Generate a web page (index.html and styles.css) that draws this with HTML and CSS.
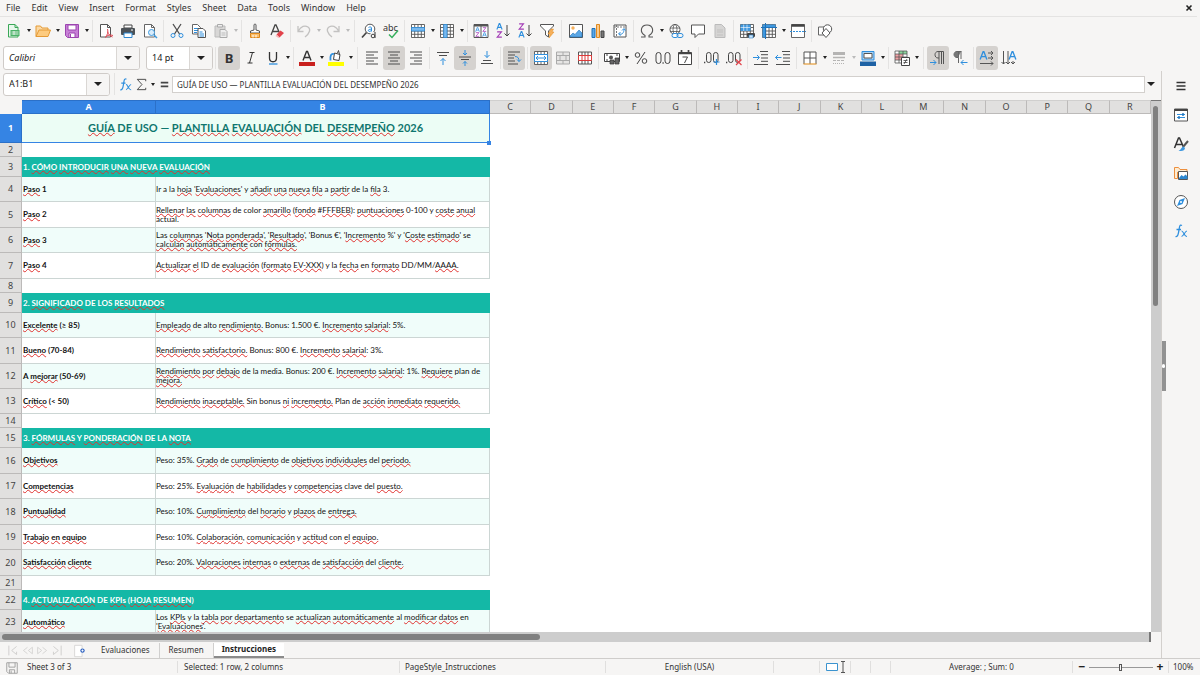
FILE: index.html
```html
<!DOCTYPE html>
<html lang="en">
<head>
<meta charset="utf-8">
<title>Instrucciones - Calc</title>
<link rel="stylesheet" href="styles.css">
</head>
<body>
<svg class="defs" aria-hidden="true">
  <symbol id="new" viewBox="0 0 16 16"><path d="M2.500 1.500h6.500l3 3v9.500h-9.500z" fill="#e8f8ec" stroke="#3aa757"/><path d="M9 1.500v3h3" fill="none" stroke="#3aa757"/><path d="M4.500 7h9v6h-9z" fill="#4bb268"/><path d="M5.500 9h7M5.500 11h7M8 8v4" stroke="#fff" stroke-width=".8"/></symbol>
  <symbol id="open" viewBox="0 0 16 16"><path d="M1 13.500V3h4.500l1.500 2h6v2" fill="#fbd9a4" stroke="#e59a35"/><path d="M1 13.500 4 7h11.500l-2.500 6.500z" fill="#fdcb7f" stroke="#e59a35"/></symbol>
  <symbol id="save" viewBox="0 0 16 16"><path d="M1.500 1.500h13v13H3.500l-2-2z" fill="#c77fd6" stroke="#9c45b0"/><path d="M4 2h8v5H4z" fill="#fff" stroke="#9c45b0"/><path d="M5 10h6v4.500H5z" fill="#fff" stroke="#9c45b0"/><path d="M6.500 11v3" stroke="#9c45b0"/></symbol>
  <symbol id="pdf" viewBox="0 0 16 16"><path d="M2.500 1.500h7l3 3v9.500h-10z" fill="#fff" stroke="#555"/><path d="M9.500 1.500v3h3" fill="none" stroke="#555"/><path d="M9.500 6c1 3 0 5.500-2 8.500M7.500 14c2-2 5-2.500 7.500-1.500M9.500 8.500c1 3 3 5 5 5.500" fill="none" stroke="#df4a55"/></symbol>
  <symbol id="print" viewBox="0 0 16 16"><path d="M4 2h8v3H4z" fill="#fff" stroke="#444"/><rect x="1" y="5" width="14" height="7" rx="1" fill="#4c5257"/><path d="M4 10h8v4.500H4z" fill="#fff" stroke="#2d87d0"/><path d="M11 7h2" stroke="#fff"/></symbol>
  <symbol id="preview" viewBox="0 0 16 16"><path d="M2.500 1.500h7l3 3v9.500h-10z" fill="#fff" stroke="#666"/><path d="M9.500 1.500v3h3" fill="none" stroke="#666"/><circle cx="9.500" cy="9.500" r="3" fill="#d9ecfb" stroke="#3f9be0"/><path d="m12 12 3 3" stroke="#3f9be0" stroke-width="1.500"/></symbol>
  <symbol id="cut" viewBox="0 0 16 16"><path d="m4 1 6.500 10M12 1 5.500 11" stroke="#4d4d4d" stroke-width="1.300"/><circle cx="4" cy="12.500" r="2" fill="none" stroke="#2f8fdd"/><circle cx="12" cy="12.500" r="2" fill="none" stroke="#2f8fdd"/></symbol>
  <symbol id="copy" viewBox="0 0 16 16"><path d="M1.500 1.500h5l3 3V11h-8z" fill="#fff" stroke="#666"/><path d="M3 5.500h4M3 7.500h4M3 9.500h3" stroke="#2f8fdd"/><path d="M7 5.500h5l2.500 2.500v6.500H7z" fill="#fff" stroke="#555"/><path d="M8.500 9h3M8.500 11h4.500M8.500 13h4.500" stroke="#2f8fdd"/></symbol>
  <symbol id="paste" viewBox="0 0 16 16"><path d="M2 3h10v11H2z" fill="#d8d7d6" stroke="#bbb"/><path d="M4.500 1.500h5v2.500h-5z" fill="#eee" stroke="#aaa"/><path d="M7 6.500h5l2 2v6H7z" fill="#eee" stroke="#aaa"/><path d="M8.500 10h4M8.500 12h4" stroke="#bbb"/></symbol>
  <symbol id="clone" viewBox="0 0 16 16"><path d="M7 7V2c0-1.300 2-1.300 2 0v5l3.500 1v2h-9V8z" fill="#fff" stroke="#555"/><path d="M3.500 10.500h9v4h-9z" fill="#fbc070" stroke="#e08a1e"/><path d="M6 12v2.500M9 12v2.500" stroke="#fff"/></symbol>
  <symbol id="clear" viewBox="0 0 16 16"><path d="M2 12 6 2h1l4 9M3.500 8.500h6" fill="none" stroke="#444" stroke-width="1.300"/><path d="m7.500 11.500 4-4 3.500 2.500-4.500 4.500z" fill="#e2434b"/><path d="m7.500 11.500 3 3-1 .5-3-2z" fill="#f7b5b8"/></symbol>
  <symbol id="undo" viewBox="0 0 16 16"><path d="M2 3v5.500h5.500M2 8.500C5 3 9 2 12 4s2 6-3 10" fill="none" stroke="#c3c2c1" stroke-width="1.300"/></symbol>
  <symbol id="redo" viewBox="0 0 16 16"><path d="M14 3v5.500H8.500M14 8.500C11 3 7 2 4 4s-2 6 3 10" fill="none" stroke="#c3c2c1" stroke-width="1.300"/></symbol>
  <symbol id="find" viewBox="0 0 16 16"><circle cx="9" cy="6" r="4.800" fill="#fff" stroke="#555"/><path d="m5.500 9.500-4.500 5" stroke="#444" stroke-width="1.700"/><path d="M7.500 4.500c1-.8 3-.8 3 .5v3.500M10.500 6.200c-2 0-3.200.4-3.200 1.300 0 1.300 2.500 1.300 3.200-.3" fill="none" stroke="#2f8fdd"/><path d="M9.500 9h6v6.500h-6z" fill="#f6f5f4"/><circle cx="12" cy="13" r="1.800" fill="none" stroke="#444"/><path d="M14 9v6" stroke="#444" stroke-width="1.100"/></symbol>
  <symbol id="spell" viewBox="0 0 16 16"><text x="0" y="7.500" font-size="9" fill="#333">abc</text><path d="m6 11.500 3 3 6-7" fill="none" stroke="#36b05d" stroke-width="1.500"/></symbol>
  <symbol id="grid" viewBox="0 0 16 16"><path d="M1.500 1.500h13v13h-13z" fill="#fff"/><path d="M1.500 4.500h13M1.500 8h13M1.500 11.300h13M4.700 1.500v13M8 1.500v13M11.300 1.500v13M1.500 1.500h13v13h-13z" fill="none" stroke="#555" stroke-width=".9"/></symbol>
  <symbol id="row" viewBox="0 0 16 16"><use href="#grid"/><path d="M1.500 4.500h13V8h-13z" fill="#79b9ee" stroke="#2f8fdd" stroke-width=".8"/></symbol>
  <symbol id="col" viewBox="0 0 16 16"><use href="#grid"/><path d="M4.700 1.500H8v13H4.700z" fill="#79b9ee" stroke="#2f8fdd" stroke-width=".8"/></symbol>
  <symbol id="ga" viewBox="0 0 8 8"><path d="M1 7.500 3.700.5h.6L7 7.500M2 5h4" fill="none" stroke="#2f8fdd" stroke-width="1.200"/></symbol>
  <symbol id="gz" viewBox="0 0 8 8"><path d="M1.300 1h5L1.300 7h5.400" fill="none" stroke="#a33bb5" stroke-width="1.200"/></symbol>
  <symbol id="sort" viewBox="0 0 16 16"><path d="M1 1.500h14v13H1z" fill="#fff" stroke="#555"/><path d="M1 2.500h14" stroke="#555" stroke-width="2"/><path d="M8 3v11" stroke="#555"/><use href="#ga" x="2" y="4" width="5" height="5"/><use href="#gz" x="2" y="9" width="5" height="5"/><use href="#gz" x="9" y="4" width="5" height="5"/><use href="#ga" x="9" y="9" width="5" height="5"/></symbol>
  <symbol id="az" viewBox="0 0 16 16"><use href="#ga" x="1" y="0" width="7" height="7"/><use href="#gz" x="1" y="8" width="7" height="7"/><path d="M12 2v11M9.500 10.500 12 13l2.500-2.500" fill="none" stroke="#444"/></symbol>
  <symbol id="za" viewBox="0 0 16 16"><use href="#gz" x="1" y="0" width="7" height="7"/><use href="#ga" x="1" y="8" width="7" height="7"/><path d="M12 2v11M9.500 10.500 12 13l2.500-2.500" fill="none" stroke="#444"/></symbol>
  <symbol id="filter" viewBox="0 0 16 16"><path d="M1.500 1.500h13v1.500L9.500 8v6l-3-2V8l-5-5z" fill="#fff" stroke="#555"/><path d="m12 6-3 5h2l-1 4 5-6h-2l1.500-3z" fill="#f6b05b" stroke="#e08a1e" stroke-width=".5"/></symbol>
  <symbol id="image" viewBox="0 0 16 16"><path d="M1.500 1.500h13v13h-13z" fill="#fff" stroke="#555"/><circle cx="5" cy="5" r="1.700" fill="#f6b05b"/><path d="m2 13 3-3 2 1.500L11 7l3 3v4H2z" fill="#5aa7e6" stroke="#1e72ba" stroke-width=".6"/></symbol>
  <symbol id="chart" viewBox="0 0 16 16"><path d="M2 5.500h3v9H2z" fill="#5aa7e6" stroke="#1e72ba"/><path d="M6.500 1.500h3v13h-3z" fill="#fbc98a" stroke="#e08a1e"/><path d="M11 8h3v6.500h-3z" fill="#777" stroke="#444"/></symbol>
  <symbol id="pivot" viewBox="0 0 16 16"><path d="M2 2h12v12H2z" fill="#fff" stroke="#555"/><path d="M2 4h12M4.500 2v12" stroke="#777" stroke-dasharray="2 1"/><path d="M7 11c3 1 5-1 5-5M10 7.500 12 5.500l1.500 2M8.500 9 6.500 11l2 1.500" fill="none" stroke="#2f8fdd"/></symbol>
  <symbol id="omega" viewBox="0 0 16 16"><path d="M2 14h4v-1.500C0 9 2 2 8 2s8 7 2 10.500V14h4" fill="none" stroke="#555" stroke-width="1.100"/></symbol>
  <symbol id="link" viewBox="0 0 16 16"><circle cx="7" cy="6.500" r="5" fill="#fff" stroke="#555"/><ellipse cx="7" cy="6.500" rx="2" ry="5" fill="none" stroke="#555" stroke-width=".8"/><path d="M2 5h10M2 8.500h10" stroke="#555" stroke-width=".8"/><rect x="4" y="10.500" width="6" height="4" rx="2" fill="#fff" stroke="#2f8fdd"/><rect x="9" y="10.500" width="6" height="4" rx="2" fill="none" stroke="#2f8fdd"/></symbol>
  <symbol id="comment" viewBox="0 0 16 16"><path d="M1.500 2h13v9H8.500L5 14.500V11H1.500z" fill="#fff" stroke="#555"/></symbol>
  <symbol id="header" viewBox="0 0 16 16"><path d="M3 1.500h6.500L13 5v9.500H3z" fill="#d6d5d4" stroke="#bbb"/><path d="M5 7h6M5 9h6M5 12h6" stroke="#c2c1c0"/></symbol>
  <symbol id="parea" viewBox="0 0 16 16"><use href="#grid"/><path d="M1.500 1.500h10v6.500h-10z" fill="#3f98df"/><path d="M1.500 4.500h10M4.700 1.500v6.500M8 1.500v6.500" stroke="#fff" stroke-width=".6"/><rect x="8" y="10" width="8" height="4" rx="1" fill="#444"/><path d="M10 12h4v3h-4z" fill="#cfe6f9" stroke="#2d87d0" stroke-width=".6"/></symbol>
  <symbol id="freeze" viewBox="0 0 16 16"><use href="#grid"/><path d="M1.500 1.500h13v3h-13zM1.500 4.500H5v10H1.500z" fill="#3f98df"/><path d="M4.500 0v16M0 4.500h16" stroke="#1e72ba"/></symbol>
  <symbol id="split" viewBox="0 0 16 16"><path d="M1.500 1.500h13v13h-13z" fill="#fff" stroke="#666"/><path d="M1.500 2.500h13" stroke="#444" stroke-width="2.500"/><path d="M0 8.500h16" stroke="#2f8fdd" stroke-dasharray="2 1"/></symbol>
  <symbol id="shapes" viewBox="0 0 16 16"><path d="M1.500 4h7v8h-7z" fill="#fff" stroke="#666"/><circle cx="10.500" cy="6" r="4.200" fill="#fff" stroke="#555"/><path d="m9 5.500 4 4.500-4 4.500L5 10z" fill="#fff" stroke="#555"/></symbol>
  <symbol id="italic" viewBox="0 0 16 16"><path d="M6.500 2.500h5M4.500 13h5M9.500 2.500 6.500 13" fill="none" stroke="#333"/></symbol>
  <symbol id="uline" viewBox="0 0 16 16"><path d="M4.500 2v6c0 5 7 5 7 0V2" fill="none" stroke="#333" stroke-width="1.300"/><path d="M4 14h8.500" stroke="#2f8fdd" stroke-width="1.300"/></symbol>
  <symbol id="fcolor" viewBox="0 0 16 16"><path d="m4 10.500 3.500-9h1l3.500 9M5.200 7.500h5.600" fill="none" stroke="#333" stroke-width="1.400"/><path d="M0 12h16v4H0z" fill="#c9211e"/></symbol>
  <symbol id="bcolor" viewBox="0 0 16 16"><path d="M0 12h16v4H0z" fill="#ff0"/><path d="m6.500 3 5.500 1.500-1 6-5.500-1zM9.500 3l1-2.500 1 4" fill="#fff" stroke="#444"/><path d="M6 4C3 3 2 6 2.500 10.500" fill="none" stroke="#2f8fdd" stroke-width="1.800"/></symbol>
  <symbol id="left" viewBox="0 0 16 16"><path d="M2 2h12M2 5h8M2 8h12M2 11h8M2 14h12" stroke="#4d4d4d"/></symbol>
  <symbol id="center" viewBox="0 0 16 16"><path d="M2 2h12M4 5h8M2 8h12M4 11h8M2 14h12" stroke="#4d4d4d"/></symbol>
  <symbol id="right" viewBox="0 0 16 16"><path d="M2 2h12M6 5h8M2 8h12M6 11h8M2 14h12" stroke="#4d4d4d"/></symbol>
  <symbol id="top" viewBox="0 0 16 16"><path d="M2 2.500h12M4 5.500h8" stroke="#4d4d4d"/><path d="M8 15V8.500M5.500 11 8 8.500l2.500 2.500" fill="none" stroke="#2f8fdd"/></symbol>
  <symbol id="middle" viewBox="0 0 16 16"><path d="M2 7h12M4 9.500h8" stroke="#4d4d4d"/><path d="M8 0v5M6 3l2 2 2-2M8 16v-4.500M6 13.500l2-2 2 2" fill="none" stroke="#2f8fdd"/></symbol>
  <symbol id="bottom" viewBox="0 0 16 16"><path d="M4 10.500h8M2 13.500h12" stroke="#4d4d4d"/><path d="M8 1v6.500M5.500 5 8 7.500 10.500 5" fill="none" stroke="#2f8fdd"/></symbol>
  <symbol id="wrap" viewBox="0 0 16 16"><path d="M2 2h12M2 5h7M2 8h6M2 11h7M2 14h10" stroke="#4d4d4d"/><path d="M9 6.500c3 0 4 1.500 4 5M11 9.500l2 2 2-2" fill="none" stroke="#2f8fdd"/></symbol>
  <symbol id="merge" viewBox="0 0 16 16"><use href="#grid"/><path d="M1.500 4.500h13v7h-13z" fill="#fff" stroke="#2f8fdd"/><path d="M3 8h10M5 6 3 8l2 2M11 6l2 2-2 2" fill="none" stroke="#2f8fdd"/></symbol>
  <symbol id="mergec" viewBox="0 0 16 16"><path d="M1.500 2h13v12h-13zM1.500 5.500h13M1.500 10.500h13M8 2v3.500M8 10.500V14M5 5.500v5M11 5.500v5" fill="#e6e5e4" stroke="#aaa"/></symbol>
  <symbol id="unmerge" viewBox="0 0 16 16"><path d="M1.500 2h13v12h-13zM5 2v12M11 2v12M8 2v12" fill="#fff" stroke="#555"/><path d="M1.500 5.500h13v5h-13zM5 5.500v5M8 5.500v5M11 5.500v5" fill="#fff" stroke="#dc3b3b"/></symbol>
  <symbol id="money" viewBox="0 0 16 16"><path d="M.5 3.500h15v8H.5z" fill="#fff" stroke="#444"/><circle cx="7" cy="7.500" r="2" fill="#555"/><path d="M2 5h2M12 5h2M2 10h2" stroke="#444"/><path d="M6 10h4v4H6zM11 8h4v6h-4z" fill="#666" stroke="#333" stroke-width=".7"/></symbol>
  <symbol id="percent" viewBox="0 0 16 16"><circle cx="4.500" cy="5" r="2.300" fill="none" stroke="#444"/><circle cx="11.500" cy="11" r="2.300" fill="none" stroke="#444"/><path d="M12 2 4 14" stroke="#444"/></symbol>
  <symbol id="number" viewBox="0 0 16 16"><rect x="1" y="2.500" width="5" height="11" rx="2.500" fill="none" stroke="#444"/><rect x="10" y="2.500" width="5" height="11" rx="2.500" fill="none" stroke="#444"/><path d="M7.500 13h1.200" stroke="#444" stroke-width="1.300"/></symbol>
  <symbol id="date" viewBox="0 0 16 16"><path d="M1.500 2.500h13v12h-13z" fill="#fff" stroke="#444"/><path d="M1.500 3.500h13M4.500 0v3M11.500 0v3" stroke="#444" stroke-width="1.700"/><path d="M5.500 7h5L7.500 13" fill="none" stroke="#444"/></symbol>
  <symbol id="dec" viewBox="0 0 16 16"><rect x="2.500" y="2.500" width="4.500" height="10" rx="2.200" fill="none" stroke="#444"/><rect x="9.500" y="2.500" width="4.500" height="10" rx="2.200" fill="none" stroke="#444"/><path d="M0 12.500h1.300" stroke="#444" stroke-width="1.300"/></symbol>
  <symbol id="adddec" viewBox="0 0 16 16"><use href="#dec"/><path d="M12.500 9v6M9.500 12h6" stroke="#2f8fdd" stroke-width="1.200"/></symbol>
  <symbol id="deldec" viewBox="0 0 16 16"><use href="#dec"/><path d="m10 9.500 5.500 5.500M15.500 9.500 10 15" stroke="#e2434b" stroke-width="1.200"/></symbol>
  <symbol id="indent" viewBox="0 0 16 16"><path d="M7 1.500h8M8 4.700h7M8 8h7M8 11.300h7M1 14.500h14" stroke="#4d4d4d"/><path d="M0 7.500h6M4 5l2.500 2.500L4 10" fill="none" stroke="#2f8fdd"/></symbol>
  <symbol id="outdent" viewBox="0 0 16 16"><path d="M7 1.500h8M8 4.700h7M8 8h7M8 11.300h7M1 14.500h14" stroke="#4d4d4d"/><path d="M6.500 7.500h-6M3 5 .5 7.500 3 10" fill="none" stroke="#2f8fdd"/></symbol>
  <symbol id="border" viewBox="0 0 16 16"><path d="M2 2h12v12H2z" fill="#fff"/><path d="M2 14V2h12v12M8 2v12M2 8h12" fill="none" stroke="#555"/><path d="M1.500 14h13" stroke="#e59a35" stroke-width="1.200"/></symbol>
  <symbol id="bstyle" viewBox="0 0 16 16"><path d="M2 2h12v3H2z" fill="#b5b4b3"/><path d="M2 7.500h12" stroke="#b5b4b3" stroke-width="1.500"/><path d="M2 10.500h12" stroke="#b5b4b3" stroke-dasharray="3 1"/><path d="M2 13.500h12" stroke="#b5b4b3" stroke-dasharray="1 1"/></symbol>
  <symbol id="bline" viewBox="0 0 16 16"><path d="M2 1.500h12V10H2z" fill="#a9d2f5" stroke="#2f8fdd"/><path d="M4 3.500h8V8H4z" fill="#fff" stroke="#555"/><path d="M0 11.500h16V16H0z" fill="#1e62a5"/></symbol>
  <symbol id="cond" viewBox="0 0 16 16"><path d="M1 1h12v12H1z" fill="#fff"/><path d="M5 1h8v3H5z" fill="#8bd69c"/><path d="M1 4h8v6H1z" fill="#f2a1a4"/><path d="M1 1h12v12H1zM1 4h12M1 7h12M1 10h12M5 1v12M9 1v12" fill="none" stroke="#555" stroke-width=".8"/><path d="M7.500 7.500h8v8h-8z" fill="#fff" stroke="#444"/><path d="M9.500 10.500h4M9.500 12.500h4M13 9l-3 5" stroke="#444" stroke-width=".8"/></symbol>
  <symbol id="ltr" viewBox="0 0 16 16"><path d="M13.500 14V1.500H8C4 1.500 4 8 8 8h1V1.500M11.500 14V1.500M9 8v6" fill="none" stroke="#555"/><path d="M0 12.500h6M3.500 10 6 12.500 3.500 15" fill="none" stroke="#2f8fdd"/></symbol>
  <symbol id="rtl" viewBox="0 0 16 16"><path d="M9 1.500H5c-4 0-4 6 0 6h1z" fill="#777"/><path d="M9.500 1.500H5c-4 0-4 6 0 6h1.500V13M6.500 1.500v6M9 1.500V9" fill="none" stroke="#666"/><path d="M15.500 12.500H9M11.500 10 9 12.500l2.500 2.500" fill="none" stroke="#2f8fdd"/></symbol>
  <symbol id="tlr" viewBox="0 0 16 16"><use href="#ga" x="0" y="1" width="9" height="9"/><path d="M9 3h5M9 8h5M1 13.500h13M12 1l2 2-2 2M12 6l2 2-2 2M12 11.500l2 2-2 2" fill="none" stroke="#555"/></symbol>
  <symbol id="ttb" viewBox="0 0 16 16"><use href="#ga" x="7" y="1" width="9" height="9"/><path d="M2.500 1v13M7 1v13M12 11v3M.5 12l2 2 2-2M5 12l2 2 2-2M10 12l2 2 2-2" fill="none" stroke="#555"/></symbol>
  <symbol id="fx" viewBox="0 0 16 16"><path d="M9 2.500C6.500 1 6.500 4 6 7s-1 7.500-3.500 6.500M3.500 6.500h4.500" fill="none" stroke="#2f8fdd" stroke-width="1.300"/><path d="M8.500 8c2-.5 2.500 6 5.500 5.500M14 8c-2 0-3.500 5.500-5.500 5.500" fill="none" stroke="#2f8fdd" stroke-width="1.100"/></symbol>
  <symbol id="sigma" viewBox="0 0 16 16"><path d="M12.500 4.500v-2h-9L8.500 8l-5 5.500h9v-2" fill="none" stroke="#444"/></symbol>
  <symbol id="equal" viewBox="0 0 16 16"><path d="M4 6h8M4 10h8" stroke="#444" stroke-width="1.700"/></symbol>
  <symbol id="menu" viewBox="0 0 16 16"><path d="M3.500 4.500h9M3.500 8h9M3.500 11.500h9" stroke="#333" stroke-width="1.300"/></symbol>
  <symbol id="props" viewBox="0 0 16 16"><path d="M1.500 2h13v12h-13z" fill="#fff" stroke="#555"/><path d="M1.500 3h13" stroke="#444" stroke-width="2"/><path d="M4 7.500h8M4 10.500h8" stroke="#2f8fdd"/><path d="M10 6v3M6 9v3" stroke="#1e72ba" stroke-width="1.400"/></symbol>
  <symbol id="styles" viewBox="0 0 16 16"><path d="M1.500 12 5.500 2h1l4 9M3 8.500h6" fill="none" stroke="#333" stroke-width="1.500"/><path d="m15 5-5 6" stroke="#555" stroke-width="2"/><path d="M10.500 10.500c-2 0-2 3.500-5 4 3 1.500 6.500 0 6.500-2.500z" fill="#3f98df"/></symbol>
  <symbol id="gallery" viewBox="0 0 16 16"><path d="M1.500 13.500V2.500h4l1.500 2h7V7" fill="#fdecd2" stroke="#ed8f3d"/><path d="M1.500 13.500h3V7" fill="none" stroke="#ed8f3d"/><path d="M5.500 6.500h9v8h-9z" fill="#fff" stroke="#555"/><path d="m6 13 2.500-3 2 1.500 2-2 2 2V14H6z" fill="#2d87d0"/></symbol>
  <symbol id="compass" viewBox="0 0 16 16"><circle cx="8" cy="8" r="6.500" fill="#fff" stroke="#555"/><path d="m12 4-2.500 6L4 12l2.500-6z" fill="#2f8fdd"/><circle cx="8" cy="8" r="1" fill="#fff"/></symbol>
  <symbol id="disk" viewBox="0 0 16 16"><path d="M2 2h12v12H4l-2-2zM4.500 2v5h7V2M5 14v-4h6v4M7 11v3" fill="none" stroke="#999"/></symbol>
  <symbol id="addsheet" viewBox="0 0 16 16"><path d="M3 1.500h8.500v13H3z" fill="#fff" stroke="#d6d5d4"/><circle cx="12" cy="7.500" r="2.500" fill="#3568c4"/><path d="M12 6.300v2.400M10.800 7.500h2.400" stroke="#fff"/></symbol>
  <symbol id="first" viewBox="0 0 16 16"><path d="M3.500 2v12M13 3 7 8l6 5V9.500" fill="none" stroke="#d0cfce" stroke-width="1.200"/></symbol>
  <symbol id="prev" viewBox="0 0 16 16"><path d="M8 4 3 8l5 4M14 4 9 8l5 4z" fill="none" stroke="#d0cfce"/></symbol>
  <symbol id="next" viewBox="0 0 16 16"><path d="m8 4 5 4-5 4M2 4l5 4-5 4z" fill="none" stroke="#d0cfce"/></symbol>
  <symbol id="last" viewBox="0 0 16 16"><path d="M12.500 2v12M3 3l6 5-6 5V9.500" fill="none" stroke="#d0cfce" stroke-width="1.200"/></symbol>
</svg>

<header class="menubar">
  <nav class="menus">
    <button>File</button><button>Edit</button><button>View</button><button>Insert</button><button>Format</button><button>Styles</button><button>Sheet</button><button>Data</button><button>Tools</button><button>Window</button><button>Help</button>
  </nav>
  <button class="close" aria-label="Close"><svg viewBox="0 0 8 8"><path d="m1.500 1.500 5 5M6.500 1.500l-5 5" stroke="#222" stroke-width="1.600"/></svg></button>
</header>

<div class="toolbar standard">
  <button class="tb" aria-label="New"><svg><use href="#new"/></svg></button><button class="dd" aria-label="New options"></button>
  <button class="tb" aria-label="Open"><svg><use href="#open"/></svg></button><button class="dd" aria-label="Open options"></button>
  <button class="tb" aria-label="Save"><svg><use href="#save"/></svg></button><button class="dd" aria-label="Save options"></button>
  <span class="sep"></span>
  <button class="tb" aria-label="Export as PDF"><svg><use href="#pdf"/></svg></button>
  <button class="tb" aria-label="Print"><svg><use href="#print"/></svg></button>
  <button class="tb" aria-label="Print preview"><svg><use href="#preview"/></svg></button>
  <span class="sep"></span>
  <button class="tb" aria-label="Cut"><svg><use href="#cut"/></svg></button>
  <button class="tb" aria-label="Copy"><svg><use href="#copy"/></svg></button>
  <button class="tb" aria-label="Paste"><svg><use href="#paste"/></svg></button><button class="dd off" aria-label="Paste options"></button>
  <span class="sep"></span>
  <button class="tb" aria-label="Clone formatting"><svg><use href="#clone"/></svg></button>
  <button class="tb" aria-label="Clear formatting"><svg><use href="#clear"/></svg></button>
  <span class="sep"></span>
  <button class="tb" aria-label="Undo"><svg><use href="#undo"/></svg></button><button class="dd off" aria-label="Undo options"></button>
  <button class="tb" aria-label="Redo"><svg><use href="#redo"/></svg></button><button class="dd off" aria-label="Redo options"></button>
  <span class="sep wide"></span>
  <button class="tb" aria-label="Find and replace"><svg><use href="#find"/></svg></button>
  <button class="tb" aria-label="Spelling"><svg><use href="#spell"/></svg></button>
  <span class="sep"></span>
  <button class="tb" aria-label="Row"><svg><use href="#row"/></svg></button><button class="dd" aria-label="Row options"></button>
  <button class="tb" aria-label="Column"><svg><use href="#col"/></svg></button><button class="dd" aria-label="Column options"></button>
  <span class="sep"></span>
  <button class="tb" aria-label="Sort"><svg><use href="#sort"/></svg></button>
  <button class="tb" aria-label="Sort ascending"><svg><use href="#az"/></svg></button>
  <button class="tb" aria-label="Sort descending"><svg><use href="#za"/></svg></button>
  <button class="tb" aria-label="AutoFilter"><svg><use href="#filter"/></svg></button>
  <span class="sep wide"></span>
  <button class="tb" aria-label="Image"><svg><use href="#image"/></svg></button>
  <button class="tb" aria-label="Chart"><svg><use href="#chart"/></svg></button>
  <button class="tb" aria-label="Pivot table"><svg><use href="#pivot"/></svg></button>
  <span class="sep"></span>
  <button class="tb" aria-label="Special character"><svg><use href="#omega"/></svg></button><button class="dd" aria-label="Character options"></button>
  <button class="tb" aria-label="Hyperlink"><svg><use href="#link"/></svg></button>
  <button class="tb" aria-label="Comment"><svg><use href="#comment"/></svg></button>
  <button class="tb" aria-label="Headers and footers"><svg><use href="#header"/></svg></button>
  <span class="sep"></span>
  <button class="tb" aria-label="Print area"><svg><use href="#parea"/></svg></button>
  <button class="tb" aria-label="Freeze"><svg><use href="#freeze"/></svg></button><button class="dd" aria-label="Freeze options"></button>
  <button class="tb" aria-label="Split window"><svg><use href="#split"/></svg></button>
  <span class="sep"></span>
  <button class="tb" aria-label="Draw functions"><svg><use href="#shapes"/></svg></button>
</div>

<div class="toolbar formatting">
  <div class="combo font"><input type="text" value="Calibri" aria-label="Font name"><button aria-label="Font list"></button></div>
  <div class="combo size"><input type="text" value="14 pt" aria-label="Font size"><button aria-label="Size list"></button></div>
  <span class="sep"></span>
  <button class="tb on bold" aria-label="Bold">B</button>
  <button class="tb" aria-label="Italic"><svg><use href="#italic"/></svg></button>
  <button class="tb" aria-label="Underline"><svg><use href="#uline"/></svg></button><button class="dd" aria-label="Underline options"></button>
  <span class="sep"></span>
  <button class="tb" aria-label="Font color"><svg><use href="#fcolor"/></svg></button><button class="dd" aria-label="Font color options"></button>
  <button class="tb" aria-label="Background color"><svg><use href="#bcolor"/></svg></button><button class="dd" aria-label="Background options"></button>
  <span class="sep wide"></span>
  <button class="tb" aria-label="Align left"><svg><use href="#left"/></svg></button>
  <button class="tb on" aria-label="Center"><svg><use href="#center"/></svg></button>
  <button class="tb" aria-label="Align right"><svg><use href="#right"/></svg></button>
  <span class="sep"></span>
  <button class="tb" aria-label="Align top"><svg><use href="#top"/></svg></button>
  <button class="tb on" aria-label="Center vertically"><svg><use href="#middle"/></svg></button>
  <button class="tb" aria-label="Align bottom"><svg><use href="#bottom"/></svg></button>
  <span class="sep"></span>
  <button class="tb on" aria-label="Wrap text"><svg><use href="#wrap"/></svg></button>
  <span class="sep"></span>
  <button class="tb on" aria-label="Merge and center"><svg><use href="#merge"/></svg></button>
  <button class="tb" aria-label="Merge cells"><svg><use href="#mergec"/></svg></button>
  <button class="tb" aria-label="Unmerge cells"><svg><use href="#unmerge"/></svg></button>
  <span class="sep"></span>
  <button class="tb" aria-label="Currency"><svg><use href="#money"/></svg></button><button class="dd" aria-label="Currency options"></button>
  <button class="tb" aria-label="Percent"><svg><use href="#percent"/></svg></button>
  <button class="tb" aria-label="Number"><svg><use href="#number"/></svg></button>
  <button class="tb" aria-label="Date"><svg><use href="#date"/></svg></button>
  <span class="sep"></span>
  <button class="tb" aria-label="Add decimal place"><svg><use href="#adddec"/></svg></button>
  <button class="tb" aria-label="Delete decimal place"><svg><use href="#deldec"/></svg></button>
  <span class="sep"></span>
  <button class="tb" aria-label="Increase indent"><svg><use href="#indent"/></svg></button>
  <button class="tb" aria-label="Decrease indent"><svg><use href="#outdent"/></svg></button>
  <span class="sep"></span>
  <button class="tb" aria-label="Borders"><svg><use href="#border"/></svg></button><button class="dd" aria-label="Border options"></button>
  <button class="tb" aria-label="Border style"><svg><use href="#bstyle"/></svg></button><button class="dd off" aria-label="Border style options"></button>
  <button class="tb" aria-label="Border color"><svg><use href="#bline"/></svg></button><button class="dd" aria-label="Border color options"></button>
  <span class="sep"></span>
  <button class="tb" aria-label="Conditional formatting"><svg><use href="#cond"/></svg></button><button class="dd" aria-label="Conditional options"></button>
  <span class="sep wide"></span>
  <button class="tb on" aria-label="Left to right"><svg><use href="#ltr"/></svg></button>
  <button class="tb" aria-label="Right to left"><svg><use href="#rtl"/></svg></button>
  <span class="sep"></span>
  <button class="tb on" aria-label="Text left to right"><svg><use href="#tlr"/></svg></button>
  <button class="tb" aria-label="Text top to bottom"><svg><use href="#ttb"/></svg></button>
</div>

<div class="workspace">
  <main class="main">
    <div class="formulabar">
      <div class="combo name"><input type="text" value="A1:B1" aria-label="Name box"><button aria-label="Name list"></button></div>
      <span class="sep"></span>
      <button class="fb" aria-label="Function wizard"><svg><use href="#fx"/></svg></button>
      <button class="fb" aria-label="Select function"><svg><use href="#sigma"/></svg></button><button class="dd" aria-label="Function options"></button>
      <button class="fb" aria-label="Formula"><svg><use href="#equal"/></svg></button>
      <input class="formula" type="text" value="GUÍA DE USO — PLANTILLA EVALUACIÓN DEL DESEMPEÑO 2026" aria-label="Input line">
      <button class="expand" aria-label="Expand formula bar"></button>
    </div>

    <div class="sheetarea">
      <div class="gridwrap">
        <table class="grid">
          <colgroup><col class="c-num"><col class="c-a"><col class="c-b"><col span="16"></colgroup>
          <thead><tr><th class="corner"></th><th class="sel">A</th><th class="sel">B</th><th>C</th><th>D</th><th>E</th><th>F</th><th>G</th><th>H</th><th>I</th><th>J</th><th>K</th><th>L</th><th>M</th><th>N</th><th>O</th><th>P</th><th>Q</th><th>R</th></tr></thead>
          <tbody>
            <tr class="title"><th class="sel">1</th><td colspan="2"><u>GUÍA</u> DE USO — <u>PLANTILLA</u> <u>EVALUACIÓN</u> DEL <u>DESEMPEÑO</u> 2026<span class="handle"></span></td></tr>
            <tr class="gap"><th>2</th></tr>
            <tr class="head"><th>3</th><td colspan="2">1. <u>CÓMO</u> <u>INTRODUCIR</u> <u>UNA</u> <u>NUEVA</u> <u>EVALUACIÓN</u></td></tr>
            <tr class="step tint"><th>4</th><td><u>Paso</u> 1</td><td>Ir a la <u>hoja</u> '<u>Evaluaciones</u>' y <u>añadir</u> <u>una</u> <u>nueva</u> <u>fila</u> a <u>partir</u> de la <u>fila</u> 3.</td></tr>
            <tr class="step tall"><th>5</th><td><u>Paso</u> 2</td><td><u>Rellenar</u> <u>las</u> <u>columnas</u> de color <u>amarillo</u> (<u>fondo</u> #<u>FFFBEB</u>): <u>puntuaciones</u> 0-100 y <u>coste</u> <u>anual</u> actual.</td></tr>
            <tr class="step tint"><th>6</th><td><u>Paso</u> 3</td><td>Las <u>columnas</u> '<u>Nota</u> <u>ponderada</u>', '<u>Resultado</u>', 'Bonus €', '<u>Incremento</u> %' y '<u>Coste</u> <u>estimado</u>' se <u>calculan</u> <u>automáticamente</u> con <u>fórmulas.</u></td></tr>
            <tr class="step tall"><th>7</th><td><u>Paso</u> 4</td><td><u>Actualizar</u> <u>el</u> ID de <u>evaluación</u> (<u>formato</u> <u>EV-XXX</u>) y la <u>fecha</u> en <u>formato</u> DD/MM/<u>AAAA.</u></td></tr>
            <tr class="gap"><th>8</th></tr>
            <tr class="head"><th>9</th><td colspan="2">2. <u>SIGNIFICADO</u> DE LOS <u>RESULTADOS</u></td></tr>
            <tr class="step tint"><th>10</th><td><u>Excelente</u> (≥ 85)</td><td><u>Empleado</u> de alto <u>rendimiento.</u> Bonus: 1.500 €. <u>Incremento</u> <u>salarial</u>: 5%.</td></tr>
            <tr class="step tall"><th>11</th><td><u>Bueno</u> (70-84)</td><td><u>Rendimiento</u> <u>satisfactorio.</u> Bonus: 800 €. <u>Incremento</u> <u>salarial</u>: 3%.</td></tr>
            <tr class="step tint"><th>12</th><td>A <u>mejorar</u> (50-69)</td><td><u>Rendimiento</u> <u>por</u> <u>debajo</u> de la media. Bonus: 200 €. <u>Incremento</u> <u>salarial</u>: 1%. <u>Requiere</u> plan de <u>mejora.</u></td></tr>
            <tr class="step"><th>13</th><td><u>Crítico</u> (&lt; 50)</td><td><u>Rendimiento</u> <u>inaceptable.</u> Sin bonus <u>ni</u> <u>incremento.</u> Plan de <u>acción</u> <u>inmediato</u> <u>requerido.</u></td></tr>
            <tr class="gap"><th>14</th></tr>
            <tr class="head"><th>15</th><td colspan="2">3. <u>FÓRMULAS</u> Y <u>PONDERACIÓN</u> DE LA <u>NOTA</u></td></tr>
            <tr class="step tall tint"><th>16</th><td><u>Objetivos</u></td><td>Peso: 35%. <u>Grado</u> de <u>cumplimiento</u> de <u>objetivos</u> <u>individuales</u> del <u>periodo.</u></td></tr>
            <tr class="step"><th>17</th><td><u>Competencias</u></td><td>Peso: 25%. <u>Evaluación</u> de <u>habilidades</u> y <u>competencias</u> clave del <u>puesto.</u></td></tr>
            <tr class="step tall tint"><th>18</th><td><u>Puntualidad</u></td><td>Peso: 10%. <u>Cumplimiento</u> del <u>horario</u> y <u>plazos</u> de <u>entrega.</u></td></tr>
            <tr class="step"><th>19</th><td><u>Trabajo</u> <u>en</u> <u>equipo</u></td><td>Peso: 10%. <u>Colaboración</u>, <u>comunicación</u> y <u>actitud</u> con <u>el</u> <u>equipo.</u></td></tr>
            <tr class="step tall tint"><th>20</th><td><u>Satisfacción</u> <u>cliente</u></td><td>Peso: 20%. <u>Valoraciones</u> <u>internas</u> o <u>externas</u> de <u>satisfacción</u> del <u>cliente.</u></td></tr>
            <tr class="gap"><th>21</th></tr>
            <tr class="head"><th>22</th><td colspan="2">4. <u>ACTUALIZACIÓN</u> DE <u>KPIs</u> (<u>HOJA</u> <u>RESUMEN</u>)</td></tr>
            <tr class="step tint"><th>23</th><td><u>Automático</u></td><td>Los <u>KPIs</u> y la <u>tabla</u> <u>por</u> <u>departamento</u> se <u>actualizan</u> <u>automáticamente</u> al <u>modificar</u> <u>datos</u> en '<u>Evaluaciones</u>'.</td></tr>
          </tbody>
        </table>
      </div>
      <div class="vscroll"><div class="vthumb"></div></div>
      <div class="hscroll"><div class="hthumb"></div></div>
    </div>

    <div class="tabs">
      <div class="tabnav">
        <button aria-label="First sheet"><svg><use href="#first"/></svg></button><button aria-label="Previous sheet"><svg><use href="#prev"/></svg></button><button aria-label="Next sheet"><svg><use href="#next"/></svg></button><button aria-label="Last sheet"><svg><use href="#last"/></svg></button>
      </div>
      <button class="add" aria-label="Add sheet"><svg><use href="#addsheet"/></svg></button>
      <button class="tab">Evaluaciones</button><button class="tab">Resumen</button><button class="tab current">Instrucciones</button>
    </div>
  </main>

  <aside class="sidebar">
    <div class="grip"></div>
    <button aria-label="Sidebar settings"><svg><use href="#menu"/></svg></button>
    <button aria-label="Properties"><svg><use href="#props"/></svg></button>
    <button aria-label="Styles"><svg><use href="#styles"/></svg></button>
    <button aria-label="Gallery"><svg><use href="#gallery"/></svg></button>
    <button aria-label="Navigator"><svg><use href="#compass"/></svg></button>
    <button aria-label="Functions"><svg><use href="#fx"/></svg></button>
  </aside>
</div>

<footer class="status">
  <span class="s-doc"><svg><use href="#disk"/></svg>Sheet 3 of 3</span>
  <span class="s-sel">Selected: 1 row, 2 columns</span>
  <span class="s-style">PageStyle_Instrucciones</span>
  <span class="s-lang">English (USA)</span>
  <span class="s-blank"></span>
  <span class="s-mode"><svg viewBox="0 0 20 12"><path d="M.5 2.500h11v7H.5z" fill="#fff" stroke="#3b93cf"/><path d="M15 .5h4M15 11.500h4M17 .5v11" stroke="#555"/></svg></span>
  <span class="s-cell"></span><span class="s-cell"></span>
  <span class="s-sum">Average: ; Sum: 0</span>
  <span class="s-zoom"><button aria-label="Zoom out">−</button><input type="range" min="0" max="100" value="49" aria-label="Zoom"><button aria-label="Zoom in">+</button></span>
  <span class="s-pct">100%</span>
</footer>
</body>
</html>
```
FILE: styles.css
```css
* { box-sizing: border-box; }

body {
  margin: 0;
  height: 100vh;
  display: flex;
  flex-direction: column;
  overflow: hidden;
  background: #f6f5f4;
  color: #333;
  font: 8px/12px "Noto Sans", sans-serif;
}

button, input {
  margin: 0;
  padding: 0;
  border: 0;
  background: none;
  color: inherit;
  font: inherit;
}

svg { display: block; width: 16px; height: 16px; }
svg text { font-family: "Noto Sans", sans-serif; }
.defs { display: none; }

/* Menu bar */
.menubar {
  flex: none;
  display: flex;
  justify-content: space-between;
  align-items: center;
  height: 17px;
  margin-right: 3px;
  border-bottom: 1px solid #e4e3e2;
  font-size: 9px;
}
.menus { display: flex; gap: 11px; padding-left: 6px; }
.close { width: 16px; display: grid; place-items: center; }
.close svg { width: 8px; height: 8px; }

/* Toolbars */
.toolbar { flex: none; display: flex; align-items: center; }
.standard { height: 27px; padding-left: 3px; }
.formatting { height: 27px; padding-left: 3px; }
.tb {
  flex: none;
  display: grid;
  place-items: center;
  width: 22px;
  height: 24px;
  border-radius: 3px;
}
.tb.on { background: #d5d2cf; }
.tb.bold { font-size: 13px; font-weight: bold; line-height: 16px; }
.dd {
  flex: none;
  display: grid;
  place-items: center;
  width: 7px;
  height: 22px;
}
.dd::before, .combo button::before, .expand::before {
  content: "";
  border: 2px solid transparent;
  border-top: 3px solid #222;
  border-bottom: 0;
}
.dd.off::before { border-top-color: #bbb; }
.combo button::before, .expand::before { border-width: 4px 4px 0; }
.sep { flex: none; width: 1px; height: 22px; margin: 0 2px; background: #e4e3e2; }
.sep.wide { margin: 0 3px; }

.combo {
  flex: none;
  display: flex;
  height: 24px;
  border: 1px solid #cfcbc8;
  border-radius: 3px;
  background: #fff;
  overflow: hidden;
}
.combo input { flex: 1; min-width: 0; padding-left: 5px; color: #222; font-size: 9px; }
.combo button {
  width: 23px;
  display: grid;
  place-items: center;
  border-left: 1px solid #dad7d4;
  background: #f6f5f4;
}
.combo.font { width: 137px; margin-right: 6px; }
.combo.font input { font-style: italic; }
.combo.size { width: 67px; }

/* Workspace */
.workspace { flex: 1; min-height: 0; display: flex; }
.main { flex: 1; min-width: 0; display: flex; flex-direction: column; }

.formulabar { flex: none; display: flex; align-items: center; height: 29px; padding: 0 4px 3px 3px; }
.combo.name { width: 107px; height: 23px; margin-right: 2px; }
.fb { width: 16px; display: grid; place-items: center; }
.fb svg { width: 15px; height: 15px; }
.formula {
  flex: 1;
  min-width: 0;
  height: 17px;
  padding-left: 4px;
  border: 1px solid #d3d0cd;
  background: #fff;
}
.expand { display: grid; place-items: center; width: 12px; height: 16px; }

.sheetarea {
  flex: 1;
  min-height: 0;
  display: grid;
  grid-template-columns: 1fr 10px;
  grid-template-rows: 1fr 10px;
}
.gridwrap { overflow: hidden; background: #fff; min-height: 0; }
.vscroll { padding: 5px 3px 0 2px; background: #cdcdcd; border-top: 1px solid #777; }
.vthumb { height: 38%; border-radius: 3px; background: #808080; }
.hscroll { padding: 2px; background: #cdcdcd; border-right: 2px solid #777; }
.hthumb { width: 47%; height: 6px; border-radius: 3px; background: #808080; }

.grid { width: 100%; border-collapse: separate; border-spacing: 0; table-layout: fixed; }
.c-num { width: 22px; }
.c-a { width: 134px; }
.c-b { width: 334px; }
.grid th {
  padding: 0;
  border-right: 1px solid #bcbab9;
  border-bottom: 1px solid #bcbab9;
  background: #e1e0df;
  color: #444;
  font-size: 9px;
  font-weight: normal;
  line-height: 12px;
}
.grid thead th { height: 14px; border-top: 1px solid #d0cfce; }
.grid thead .corner { border: 0; background: #f6f5f4; }
.grid th.sel { background: #3584e4; border-color: #2b70c8; color: #fff; font-weight: bold; }
.grid td { padding: 0; color: #111; font: 8px/9px Lato, sans-serif; }
.grid u {
  text-decoration: underline wavy #e0322f 1px;
  text-decoration-skip-ink: none;
  text-underline-offset: 0;
}

.title { height: 29px; }
.grid .title td {
  position: relative;
  background: #ecfdf5;
  border-right: 1px solid #3584e4;
  border-bottom: 1px solid #3584e4;
  color: #0f766e;
  font-size: 11px;
  font-weight: bold;
  line-height: 16px;
  text-align: center;
}
.handle { position: absolute; right: -2px; bottom: -3px; width: 4px; height: 4px; background: #3584e4; }
.gap { height: 14px; }
.head { height: 20px; }
.grid .head td { padding-left: 1px; background: #14b8a6; color: #fff; font-weight: bold; }
.step { height: 25px; }
.step.tall { height: 26px; }
.grid .step td { border-right: 1px solid #ccd6d4; border-bottom: 1px solid #ccd6d4; }
.grid .step td:nth-child(2) { padding-left: 1px; font-weight: bold; }
.tint td { background: #f0fdfa; }

/* Sheet tabs */
.tabs { flex: none; display: flex; align-items: center; height: 16px; }
.tabnav { display: flex; padding-left: 5px; }
.tabnav svg { width: 15px; height: 13px; }
.add { width: 27px; height: 13px; display: grid; place-items: center; }
.add svg { width: 14px; height: 14px; }
.tab { height: 15px; padding: 0 9px; border-right: 1px solid #d0cfce; }
.tab.current { padding: 0 8px; border-right: 0; border-bottom: 2px solid #8b8b8b; background: #fff; color: #222; font-weight: bold; }

/* Sidebar */
.sidebar {
  position: relative;
  flex: none;
  width: 39px;
  display: flex;
  flex-direction: column;
  border-left: 1px solid #d3d0cd;
}
.sidebar button { height: 29px; display: grid; place-items: center; }
.grip { position: absolute; left: 0; top: 46%; width: 4px; height: 50px; background: #929292; }
.grip::before { content: ""; position: absolute; left: 0; top: 23px; width: 3px; height: 4px; border-radius: 2px; background: #fff; }

/* Status bar */
.status { flex: none; display: flex; align-items: center; height: 17px; border-top: 1px solid #cfcdcb; }
.status > span { height: 12px; border-right: 1px solid #e0dfde; white-space: nowrap; }
.status .s-doc { width: 178px; padding-left: 5px; display: flex; gap: 8px; }
.s-doc svg { width: 14px; height: 14px; }
.s-sel { width: 222px; padding-left: 6px; }
.s-style { width: 206px; padding-left: 5px; }
.s-lang { flex: 1; text-align: center; }
.s-blank { width: 46px; }
.s-mode { width: 31px; padding-left: 6px; }
.s-mode svg { width: 20px; height: 12px; }
.s-cell { width: 20px; }
.s-sum { width: 182px; text-align: center; }
.status .s-zoom { width: 96px; display: flex; align-items: center; padding: 0 4px 0 5px; gap: 3px; }
.s-zoom button { width: 8px; font-size: 12px; font-weight: bold; color: #222; }
.s-zoom input { flex: 1; min-width: 0; height: 10px; appearance: none; }
.s-zoom input::-webkit-slider-runnable-track { height: 1px; background: #999; }
.s-zoom input::-webkit-slider-thumb { appearance: none; width: 3px; height: 7px; margin-top: -3px; border: 1px solid #555; background: #f6f5f4; }
.status .s-pct { width: 31px; padding-left: 4px; border-right: 0; }
```
